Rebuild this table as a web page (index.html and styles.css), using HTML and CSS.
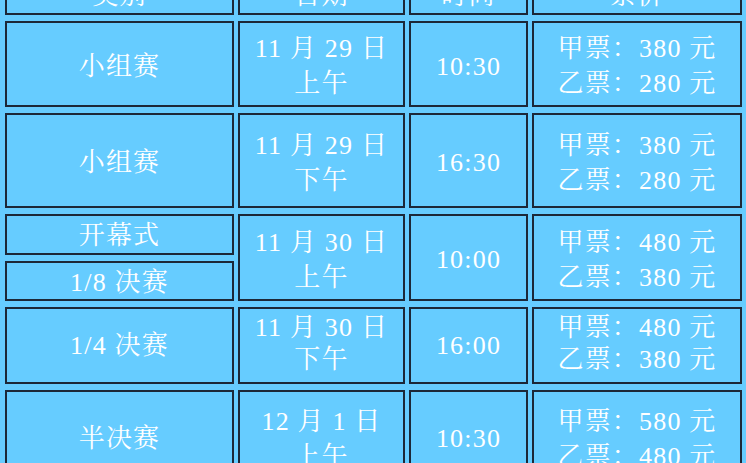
FILE: index.html
```html
<!DOCTYPE html>
<html lang="zh-CN">
<head>
<meta charset="utf-8">
<title>赛程票价</title>
<link rel="stylesheet" href="styles.css">
</head>
<body>
<table class="schedule">
  <tr class="r-head">
    <td class="c-type">类别</td>
    <td class="c-date">日期</td>
    <td class="c-time">时间</td>
    <td class="c-price">票价</td>
  </tr>
  <tr class="r-1">
    <td>小组赛</td>
    <td>11 月 29 日<br>上午</td>
    <td>10:30</td>
    <td>甲票：380 元<br>乙票：280 元</td>
  </tr>
  <tr class="r-2">
    <td>小组赛</td>
    <td>11 月 29 日<br>下午</td>
    <td>16:30</td>
    <td>甲票：380 元<br>乙票：280 元</td>
  </tr>
  <tr class="r-3a">
    <td class="short">开幕式</td>
    <td rowspan="2">11 月 30 日<br>上午</td>
    <td rowspan="2">10:00</td>
    <td rowspan="2">甲票：480 元<br>乙票：380 元</td>
  </tr>
  <tr class="r-3b">
    <td class="short">1/8 决赛</td>
  </tr>
  <tr class="r-4">
    <td>1/4 决赛</td>
    <td class="lines">11 月 30 日<br>下午</td>
    <td>16:00</td>
    <td class="lines">甲票：480 元<br>乙票：380 元</td>
  </tr>
  <tr class="r-5">
    <td>半决赛</td>
    <td>12 月 1 日<br>上午</td>
    <td>10:30</td>
    <td>甲票：580 元<br>乙票：480 元</td>
  </tr>
</table>
</body>
</html>
```
FILE: styles.css
```css
html, body {
  margin: 0;
  padding: 0;
  background: #66ccff;
  overflow: hidden;
}

.schedule {
  table-layout: fixed;
  width: 745px;
  margin: -35px 0 0 1px;
  border-collapse: separate;
  border-spacing: 4px 6px;
  font-family: "Liberation Serif", "Noto Serif CJK SC", "Noto Sans CJK SC", serif;
  font-size: 26px;
  letter-spacing: 1.2px;
  line-height: 35px;
  color: #ffffff;
}

.schedule td {
  box-sizing: border-box;
  padding: 4px 0 0;
  border: 2px solid #1c2838;
  background: #66ccff;
  text-align: center;
  vertical-align: middle;
  white-space: nowrap;
}

.schedule td.short {
  padding-top: 3px;
  line-height: 30px;
}

.schedule .r-4 td {
  padding: 0;
  line-height: 32px;
}

.schedule .r-4 td.lines {
  padding-bottom: 4px;
}

.c-type { width: 229px; }
.c-date { width: 167px; }
.c-time { width: 119px; }
.c-price { width: 210px; }

.r-head { height: 44px; }
.r-1 { height: 86px; }
.r-2 { height: 95px; }
.r-3a { height: 41px; }
.r-3b { height: 40px; }
.r-4 { height: 77px; }
.r-5 { height: 93px; }
```
